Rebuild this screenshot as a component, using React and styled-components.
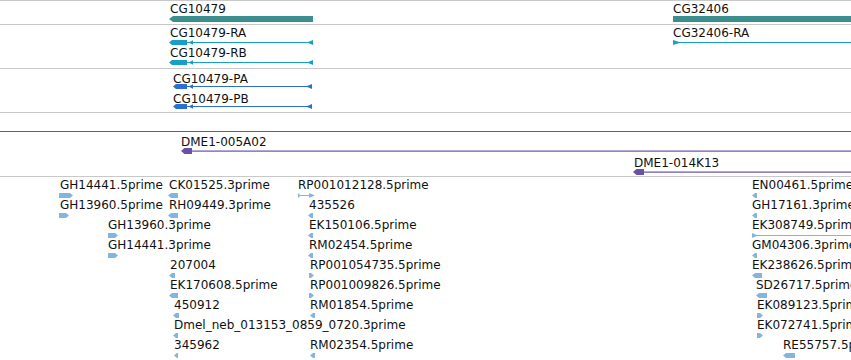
import styled, { createGlobalStyle } from "styled-components";

const VIEW_W = 851;

const Global = createGlobalStyle`
  html, body {
    margin: 0;
    padding: 0;
    background: #fff;
    overflow: hidden;
  }
`;

const Browser = styled.div`
  width: ${VIEW_W}px;
  height: 360px;
  overflow: hidden;
  display: flex;
  flex-direction: column;
  background: #fff;
  font-family: "DejaVu Sans", "Liberation Sans", sans-serif;
`;

const Track = styled.div`
  position: relative;
  box-sizing: border-box;
  flex: ${(p) => (p.$h ? "0 0 auto" : "1 1 auto")};
  height: ${(p) => (p.$h ? `${p.$h}px` : "auto")};
  border-top: 1px solid #c8c8c8;
`;

const Label = styled.div.attrs((p) => ({ style: { left: p.$x, top: p.$y } }))`
  position: absolute;
  font-size: 12px;
  line-height: 14px;
  color: #111;
  white-space: nowrap;
`;

const GlyphSvg = styled.svg.attrs((p) => ({ style: { left: p.$x, top: p.$y } }))`
  position: absolute;
  display: block;
  overflow: visible;
`;

const Line = styled.div.attrs((p) => ({ style: { top: p.$y } }))`
  position: absolute;
  left: 0;
  right: 0;
  height: 1px;
  background: ${(p) => p.$color};
`;

const colors = {
  gene: "#3c8f8f",
  tx: "#16a0c6",
  prot: "#2b6fd2",
  bac: "#6a51a6",
  est: "#82b5df",
};

function shape(kind, w, t) {
  switch (kind) {
    case "geneL":
      return { h: 6, el: <path d={`M0 3L4 0H${w}V6H4Z`} /> };
    case "bar":
      return { h: 6, el: <rect width={w} height={6} /> };
    case "tx":
      return {
        h: 5,
        el: (
          <>
            <path d={`M0 2.5L3 0H${t}V5H3Z`} />
            <path d={`M${t + 1.5} 2.5L${t + 6} 0.3V4.7Z`} />
            <rect x={t} y={2} width={w - t} height={1} />
            <path d={`M${w - 6} 2.5L${w} 0V5Z`} />
          </>
        ),
      };
    case "txR":
      return {
        h: 5,
        el: (
          <>
            <path d="M0 0L8 2.5L0 5Z" />
            <rect x={0} y={2} width={w} height={1} />
          </>
        ),
      };
    case "bacL":
      return {
        h: 6,
        el: (
          <>
            <path d="M0 3L3.5 0H11V6H3.5Z" />
            <rect x={10} y={2.5} width={w - 10} height={1.2} />
          </>
        ),
      };
    case "estR":
      return { h: 5, el: <path d={`M0 0H${w - 3}L${w} 2.5L${w - 3} 5H0Z`} /> };
    case "estL":
      return { h: 5, el: <path d={`M0 2.5L3 0H${w}V5H3Z`} /> };
    case "estLine":
      return {
        h: 5,
        el: (
          <>
            <rect x={0} y={0.5} width={1.5} height={4} />
            <rect x={0} y={2} width={w - 4} height={1} />
            <path d={`M${w - 6} 0L${w} 2.5L${w - 6} 5Z`} />
          </>
        ),
      };
    case "estRline":
      return {
        h: 5,
        el: (
          <>
            <path d="M0 0L6 2.5L0 5Z" />
            <rect x={0} y={2} width={w} height={1} />
          </>
        ),
      };
    default:
      return { h: 5, el: null };
  }
}

function Glyph({ kind, x, y, w, t, color }) {
  const width = w ?? VIEW_W - x;
  const { h, el } = shape(kind, width, t);
  return (
    <GlyphSvg $x={x} $y={y} width={width} height={h} viewBox={`0 0 ${width} ${h}`} fill={color}>
      {el}
    </GlyphSvg>
  );
}

function Feature({ f, color }) {
  return (
    <>
      <Label $x={f.lx} $y={f.ly}>{f.name}</Label>
      <Glyph kind={f.kind} x={f.gx} y={f.gy} w={f.w} t={f.t} color={color} />
    </>
  );
}

const genes = [
  { name: "CG10479", lx: 170, ly: 1, gx: 169, gy: 15, kind: "geneL", w: 144 },
  { name: "CG32406", lx: 673, ly: 1, gx: 673, gy: 15, kind: "bar" },
];

const transcripts = [
  { name: "CG10479-RA", lx: 170, ly: 1, gx: 169, gy: 15, kind: "tx", w: 144, t: 18 },
  { name: "CG10479-RB", lx: 170, ly: 21, gx: 169, gy: 35, kind: "tx", w: 144, t: 18 },
  { name: "CG32406-RA", lx: 673, ly: 1, gx: 673, gy: 15, kind: "txR" },
];

const proteins = [
  { name: "CG10479-PA", lx: 173, ly: 3, gx: 173, gy: 15, kind: "tx", w: 139, t: 14 },
  { name: "CG10479-PB", lx: 173, ly: 23, gx: 173, gy: 35, kind: "tx", w: 139, t: 14 },
];

const clones = [
  { name: "DME1-005A02", lx: 181, ly: 22, gx: 181, gy: 35, kind: "bacL" },
  { name: "DME1-014K13", lx: 634, ly: 43, gx: 633, gy: 56, kind: "bacL" },
];

// [name, label x, glyph x, row, kind, width]
const estRows = [
  ["GH14441.5prime", 60, 59, 0, "estR", 14],
  ["CK01525.3prime", 169, 168, 0, "estL", 10],
  ["RP001012128.5prime", 298, 298, 0, "estLine", 17],
  ["EN00461.5prime", 752, 752, 0, "estL", 5],
  ["GH13960.5prime", 60, 59, 1, "estR", 10],
  ["RH09449.3prime", 169, 168, 1, "estL", 10],
  ["435526", 309, 308, 1, "estL", 5],
  ["GH17161.3prime", 752, 752, 1, "estL", 5],
  ["GH13960.3prime", 108, 108, 2, "estR", 10],
  ["EK150106.5prime", 309, 308, 2, "estL", 5],
  ["EK308749.5prime", 752, 752, 2, "estRline"],
  ["GH14441.3prime", 108, 108, 3, "estR", 10],
  ["RM02454.5prime", 309, 308, 3, "estL", 5],
  ["GM04306.3prime", 752, 752, 3, "estL", 5],
  ["207004", 170, 169, 4, "estL", 6],
  ["RP001054735.5prime", 310, 309, 4, "estR", 5],
  ["EK238626.5prime", 752, 752, 4, "estL", 10],
  ["EK170608.5prime", 170, 169, 5, "estL", 9],
  ["RP001009826.5prime", 310, 309, 5, "estR", 5],
  ["SD26717.5prime", 756, 756, 5, "estL", 11],
  ["450912", 174, 173, 6, "estL", 6],
  ["RM01854.5prime", 310, 310, 6, "estL", 5],
  ["EK089123.5prime", 757, 757, 6, "estR", 6],
  ["Dmel_neb_013153_0859_0720.3prime", 174, 173, 7, "estL", 5],
  ["EK072741.5prime", 757, 757, 7, "estR", 6],
  ["345962", 174, 174, 8, "estL", 4],
  ["RM02354.5prime", 310, 310, 8, "estL", 5],
  ["RE55757.5prime", 783, 783, 8, "estL", 12],
].map(([name, lx, gx, row, kind, w]) => ({
  name,
  lx,
  gx,
  kind,
  w,
  ly: 1 + row * 20,
  gy: 16 + row * 20,
}));

export default function App() {
  return (
    <>
      <Global />
      <Browser>
        <Track $h={24}>
          {genes.map((f) => (
            <Feature key={f.name} f={f} color={colors.gene} />
          ))}
        </Track>
        <Track $h={44}>
          {transcripts.map((f) => (
            <Feature key={f.name} f={f} color={colors.tx} />
          ))}
        </Track>
        <Track $h={44}>
          {proteins.map((f) => (
            <Feature key={f.name} f={f} color={colors.prot} />
          ))}
        </Track>
        <Track $h={64}>
          <Line $y={18} $color={colors.bac} />
          {clones.map((f) => (
            <Feature key={f.name} f={f} color={colors.bac} />
          ))}
        </Track>
        <Track>
          {estRows.map((f) => (
            <Feature key={f.name} f={f} color={colors.est} />
          ))}
        </Track>
      </Browser>
    </>
  );
}
